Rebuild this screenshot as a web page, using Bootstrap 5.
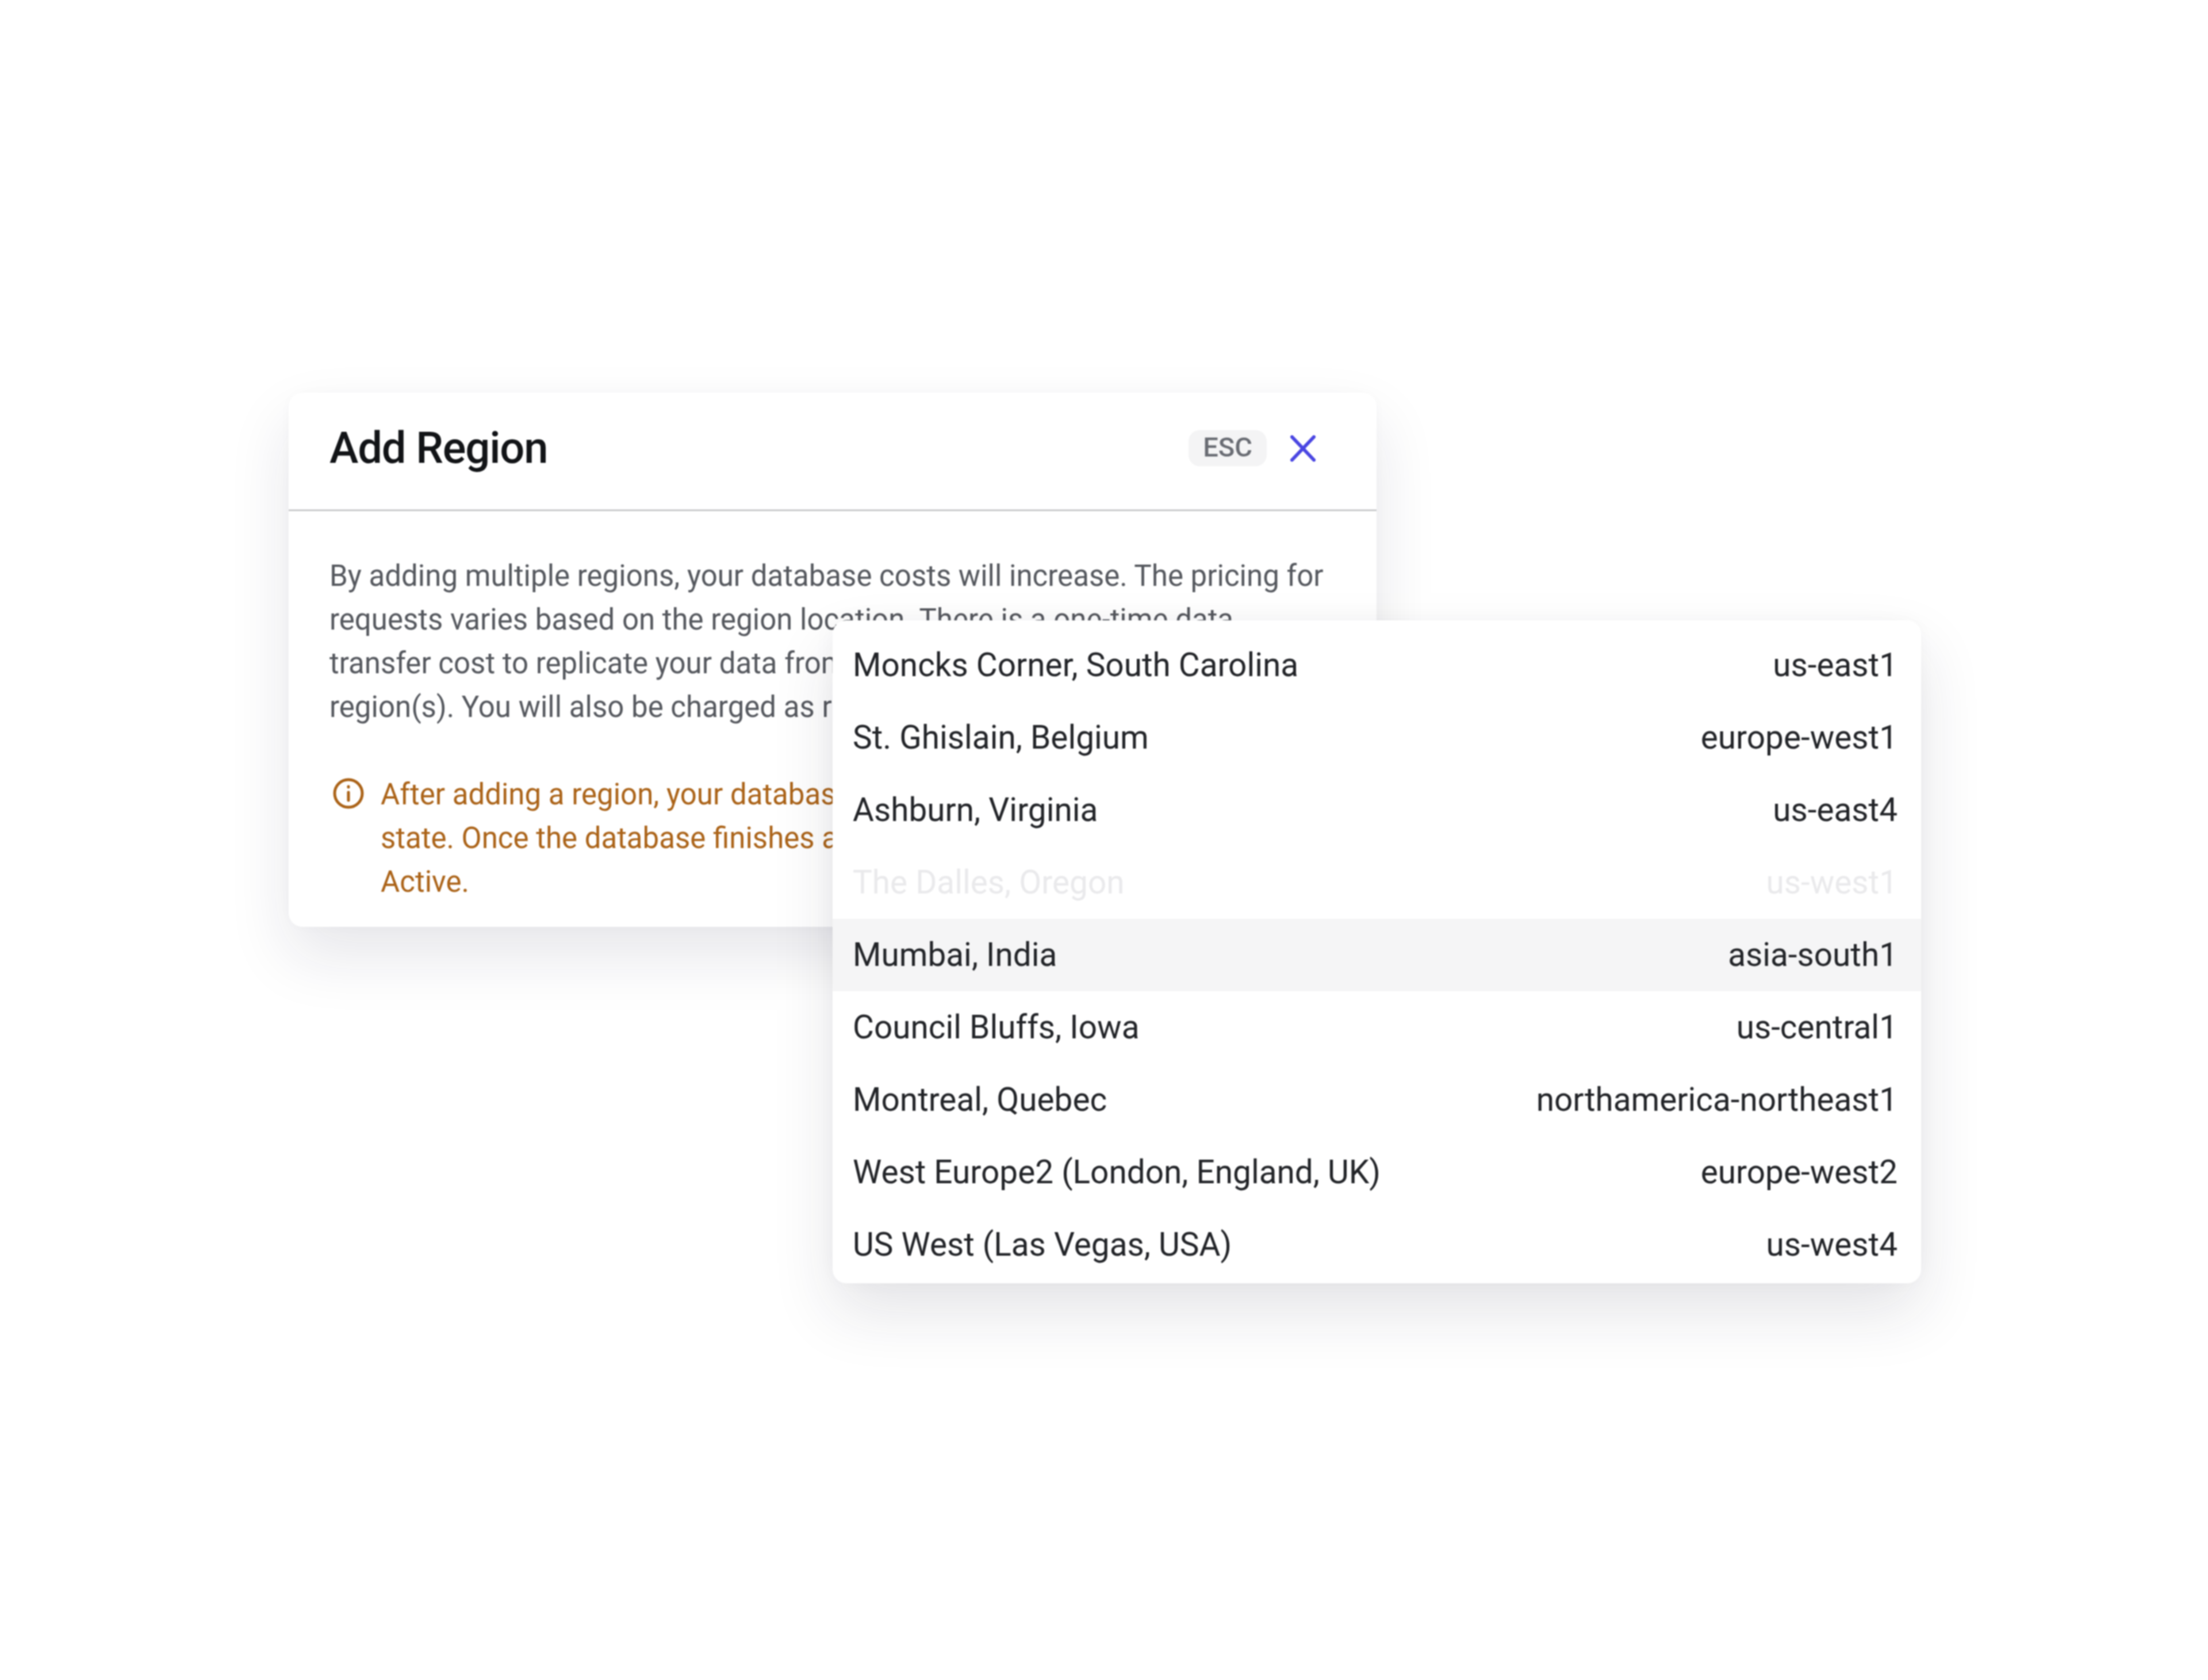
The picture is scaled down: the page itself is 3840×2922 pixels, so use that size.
<!DOCTYPE html>
<html lang="en">
<head>
  <meta charset="UTF-8" />
  <meta name="viewport" content="width=device-width, initial-scale=1.0" />
  <title>Add Region</title>
  <link href="https://cdn.jsdelivr.net/npm/bootstrap@5.3.3/dist/css/bootstrap.min.css" rel="stylesheet" />
  <style>
    body {
      font-family: "Roboto", "Liberation Sans", sans-serif;
      background-color: #fff;
      height: 2922px;
      overflow: hidden;
    }

    .stage {
      padding: 683px 0 0 502px;
      filter: blur(.8px);
    }

    .region-dialog {
      position: relative;
      width: 1892px;
      height: 929px;
      border-radius: 24px;
      background-color: #fff;
      box-shadow: 0 50px 110px rgba(30, 30, 60, .11), 0 0 30px rgba(30, 30, 60, .03);
    }

    .dialog-head {
      height: 206px;
      padding: 0 106px 10px 71px;
      border-bottom: 3px solid #c9cacc;
    }

    .dialog-title {
      font-size: 76px;
      font-weight: 500;
      letter-spacing: -1.2px;
      color: #121417;
      margin: 0;
    }

    .head-actions {
      gap: 41px;
    }

    .esc-key {
      width: 136px;
      height: 63px;
      padding-bottom: 2px;
      border-radius: 20px;
      background-color: #f4f4f5;
      color: #696c73;
      font-size: 47px;
      font-weight: 500;
    }

    .dialog-body {
      padding: 75px 71px 0;
      font-size: 51px;
      line-height: 76px;
      color: #55585e;
    }

    .intro-text {
      margin: 0 0 76px;
    }

    .warn-text {
      color: #ab6318;
    }

    .warn-text svg {
      margin: 9px 29px 0 6px;
    }

    .region-menu {
      position: absolute;
      left: 946px;
      top: 396px;
      width: 1893px;
      padding: 15px 0 4px;
      border-radius: 24px;
      background-color: #fff;
      box-shadow: 0 50px 110px rgba(30, 30, 60, .12), 0 0 40px rgba(30, 30, 60, .04);
    }

    .region-row {
      height: 126px;
      padding: 0 41px 0 35px;
      font-size: 56.7px;
      color: #222428;
    }

    .region-row.is-faded {
      color: #eaeaec;
    }

    .region-row.is-active {
      background-color: #f5f5f6;
    }
  </style>
</head>
<body>
  <div class="stage">
    <div class="region-dialog">
      <div class="dialog-head d-flex align-items-center justify-content-between">
        <h1 class="dialog-title">Add Region</h1>
        <div class="head-actions d-flex align-items-center">
          <span class="esc-key d-flex align-items-center justify-content-center">ESC</span>
          <svg width="44" height="46" viewBox="0 0 44 46" fill="none" stroke="#4a46e2" stroke-width="6" stroke-linecap="round"><path d="M3 3l38 40M41 3L3 43"/></svg>
        </div>
      </div>
      <div class="dialog-body">
        <p class="intro-text">By adding multiple regions, your database costs will increase. The pricing for<br>requests varies based on the region location. There is a one-time data<br>transfer cost to replicate your data from the primary region to the new<br>region(s). You will also be charged as reads and writes occur.</p>
        <div class="warn-text d-flex align-items-start">
          <svg class="flex-shrink-0" width="54" height="54" viewBox="0 0 54 54" fill="none" stroke="#ab6318" stroke-width="5" stroke-linecap="round"><circle cx="27" cy="27" r="24"/><path d="M27 25v14"/><path d="M27 15v1"/></svg>
          <div>After adding a region, your database will enter a Pending<br>state. Once the database finishes adding the region, it will be<br>Active.</div>
        </div>
      </div>

      <div class="region-menu">
        <div class="region-row d-flex align-items-center justify-content-between"><span>Moncks Corner, South Carolina</span><span>us-east1</span></div>
        <div class="region-row d-flex align-items-center justify-content-between"><span>St. Ghislain, Belgium</span><span>europe-west1</span></div>
        <div class="region-row d-flex align-items-center justify-content-between"><span>Ashburn, Virginia</span><span>us-east4</span></div>
        <div class="region-row is-faded d-flex align-items-center justify-content-between"><span>The Dalles, Oregon</span><span>us-west1</span></div>
        <div class="region-row is-active d-flex align-items-center justify-content-between"><span>Mumbai, India</span><span>asia-south1</span></div>
        <div class="region-row d-flex align-items-center justify-content-between"><span>Council Bluffs, Iowa</span><span>us-central1</span></div>
        <div class="region-row d-flex align-items-center justify-content-between"><span>Montreal, Quebec</span><span>northamerica-northeast1</span></div>
        <div class="region-row d-flex align-items-center justify-content-between"><span>West Europe2 (London, England, UK)</span><span>europe-west2</span></div>
        <div class="region-row d-flex align-items-center justify-content-between"><span>US West (Las Vegas, USA)</span><span>us-west4</span></div>
      </div>
    </div>
  </div>
  <script src="https://cdn.jsdelivr.net/npm/bootstrap@5.3.3/dist/js/bootstrap.bundle.min.js"></script>
</body>
</html>
